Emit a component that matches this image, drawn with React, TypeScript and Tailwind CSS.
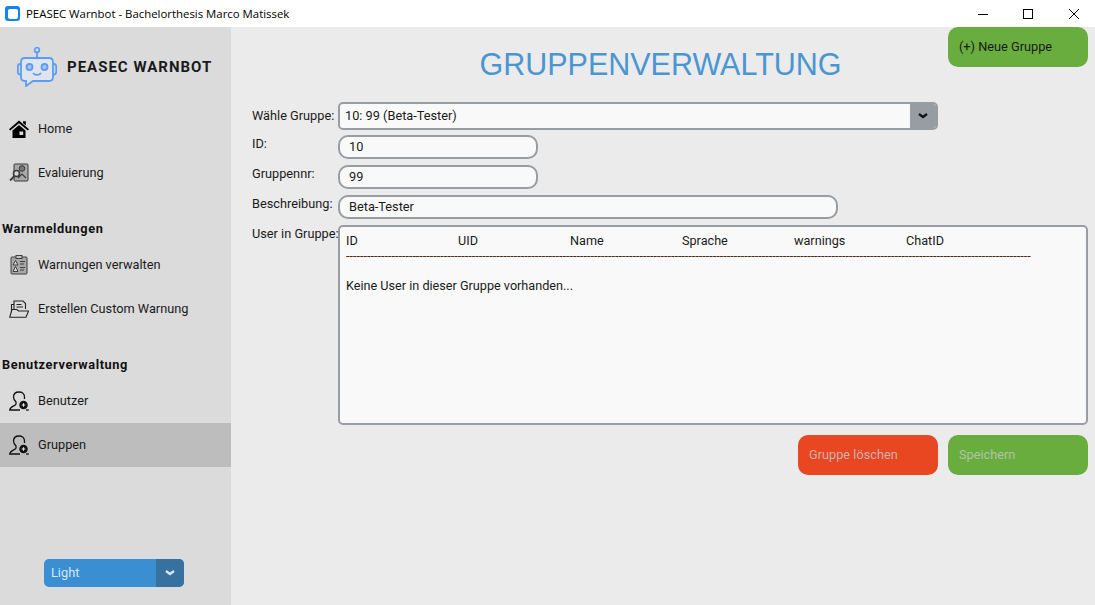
const HomeIcon = () => (
  <svg viewBox="0 0 20 18" className="h-[18px] w-5">
    <path d="M0 9.200 L10 0.500 L20 9.200 L18.800 10.600 L10 3.200 L1.200 10.600 Z M14 1.200 H16.800 V5.400 L14 3 Z" fill="#000" />
    <path fillRule="evenodd" d="M3.500 10.600 L10 5 L16.500 10.600 V18 H3.500 Z M10.500 11.500 V15 H14.200 V11.500 Z" fill="#000" />
  </svg>
);

const EvalIcon = () => (
  <svg viewBox="0 0 20 20" className="h-5 w-5" fill="none" stroke="#3a3a3a">
    <rect x="5" y="1" width="14" height="17" rx="1" fill="#a9a9a9" />
    <circle cx="13" cy="5.500" r="2.800" fill="#777" />
    <circle cx="7.500" cy="10.500" r="3" fill="#d8d8d8" strokeWidth="1.600" />
    <path d="M5.500 13 L1 17.500" strokeWidth="1.800" />
    <path d="M9 15 L13 11 L17 15" strokeWidth="1.200" />
  </svg>
);

const ManageIcon = () => (
  <svg viewBox="0 0 18 20" className="h-5 w-[18px]" fill="none" stroke="#3f3f3f">
    <rect x="1" y="2" width="16" height="17" rx="1" fill="#a8a8a8" />
    <rect x="6" y="0.500" width="6" height="3" fill="#c4c4c4" />
    <path d="M5.500 5.500 L8 10 H3 Z M5.500 11.500 L8 16.500 H3 Z" fill="#d8d8d8" />
    <path d="M10 6.500 H15 M10 9 H14 M10 12.500 H15 M10 15 H14" />
  </svg>
);

const FolderIcon = () => (
  <svg viewBox="0 0 20 18" className="h-[18px] w-5" fill="none" stroke="#222" strokeWidth="1.100">
    <path d="M5 9 V1 H14 L16.500 3.500 V9" />
    <path d="M7.500 4.500 H12.500 M7.500 7 H14" />
    <path d="M5 4.500 H2.500 V14" />
    <path d="M0.700 17.300 L3 9.500 H8 L9.500 11 H19.500 L17 17.300 Z" fill="#dbdbdb" />
  </svg>
);

const UserIcon = () => (
  <svg viewBox="0 0 20 20" className="h-5 w-5" fill="none" stroke="#111" strokeWidth="1.300">
    <path d="M15.500 8 V6 C15.500 2.500 13 1 10 1 C7 1 4.500 2.500 4.500 6 C4.500 8 5.500 9.500 7 11 V13 C7 15 1 15 0.800 19 H11" />
    <circle cx="14.500" cy="14" r="3.600" fill="#111" />
    <path d="M12.700 14 H16.300 M14.500 12.200 V15.800" stroke="#e8e8e8" strokeWidth="1.100" />
    <path d="M17 19 H19.800" />
  </svg>
);

const BotLogo = () => (
  <svg viewBox="0 0 40 40" className="h-10 w-10" fill="none" stroke="#5c9cf5" strokeWidth="1.800">
    <circle cx="20" cy="3" r="2.300" fill="#dbe6f5" />
    <path d="M20 5.500 V11" />
    <path d="M8 11 H32 C34.500 11 36 12.500 36 15 V30 C36 32.500 34.500 34 32 34 H16 L9 39 V34 H8 C5.500 34 4 32.500 4 30 V15 C4 12.500 5.500 11 8 11 Z" fill="#e0e5ed" />
    <path d="M4 17 H3 C1.500 17 0.800 18 0.800 19.500 V25 C0.800 26.500 1.500 27.500 3 27.500 H4 M36 17 H37 C38.500 17 39.200 18 39.200 19.500 V25 C39.200 26.500 38.500 27.500 37 27.500 H36" />
    <circle cx="12.500" cy="20" r="3" fill="#a9c6f0" />
    <circle cx="27.500" cy="20" r="3" fill="#a9c6f0" />
    <path d="M16 26 C18 28.500 22 28.500 24 26" />
  </svg>
);

// flat chevron of the combo boxes
const ComboArrow = ({ color }: { color: string }) => (
  <svg viewBox="0 0 10 6" className="h-[6px] w-[10px]" fill="none" stroke={color} strokeWidth="2.200">
    <path d="M1 1 L5 4 L9 1" />
  </svg>
);

const navTop = [
  { label: "Home", icon: <HomeIcon /> },
  { label: "Evaluierung", icon: <EvalIcon /> },
];
const navWarn = [
  { label: "Warnungen verwalten", icon: <ManageIcon /> },
  { label: "Erstellen Custom Warnung", icon: <FolderIcon /> },
];
const navUser = [
  { label: "Benutzer", icon: <UserIcon /> },
  { label: "Gruppen", icon: <UserIcon />, active: true },
];

const NavRow = ({ label, icon, active }: { label: string; icon: React.ReactNode; active?: boolean }) => (
  <div className={`flex h-11 items-center ${active ? "w-[231px] bg-[#bdbdbd]" : "w-[232px] bg-[#dbdbdb]"}`}>
    <span className="flex w-[38px] justify-center pl-[1px] pr-[2px]">{icon}</span>
    <span>{label}</span>
  </div>
);

const SectionTitle = ({ children }: { children: string }) => (
  <div className="flex h-12 items-end pb-[5px] pl-[2px] font-bold tracking-[0.6px] text-[#111]">{children}</div>
);

const FieldRow = ({ label, value, width }: { label: string; value: string; width: string }) => (
  <div className="flex h-[30px] items-start">
    <span className="w-[107px] pl-[21px] leading-[17px] whitespace-nowrap">{label}</span>
    <div className={`flex h-6 items-center rounded-[10px] border-2 border-[#979da2] bg-[#f9f9f9] pl-[9px] ${width}`}>
      {value}
    </div>
  </div>
);

const columns = ["ID", "UID", "Name", "Sprache", "warnings", "ChatID"];

export default function App() {
  return (
    <div className="flex h-[605px] w-[1095px] flex-col overflow-hidden bg-white font-['Roboto',sans-serif] text-[12.75px] text-[#1a1a1a]">
      {/* Titlebar */}
      <div className="flex h-[27px] shrink-0 items-center bg-white">
        <span className="ml-[5px] flex h-[15px] w-[15px] items-center justify-center rounded-[3px] bg-[#1384e8]">
          <span className="h-[10px] w-[10px] rounded-[2px] bg-white" />
        </span>
        <span className="ml-[6px] font-['Open_Sans',sans-serif] text-[11.4px] text-black">
          PEASEC Warnbot - Bachelorthesis Marco Matissek
        </span>
        <div className="ml-auto flex items-center text-black">
          <span className="flex w-[45px] justify-center">
            <svg viewBox="0 0 10 10" className="h-[10px] w-[10px]" stroke="currentColor" fill="none">
              <path d="M0 5.500 H10" />
            </svg>
          </span>
          <span className="flex w-[45px] justify-center">
            <svg viewBox="0 0 10 10" className="h-[10px] w-[10px]" stroke="currentColor" fill="none">
              <rect x="0.500" y="0.500" width="9" height="9" />
            </svg>
          </span>
          <span className="flex w-[45px] justify-center pl-[2px]">
            <svg viewBox="0 0 10 10" className="h-[10px] w-[10px]" stroke="currentColor" fill="none">
              <path d="M0 0 L10 10 M10 0 L0 10" />
            </svg>
          </span>
        </div>
      </div>

      <div className="flex min-h-0 flex-1">
        {/* Sidebar */}
        <aside className="flex w-[231px] shrink-0 flex-col bg-[#dbdbdb]">
          <div className="flex h-20 items-center gap-[10px] pl-[17px]">
            <BotLogo />
            <span className="text-[15px] font-bold tracking-[1px] whitespace-nowrap text-[#1a1a1a]">PEASEC WARNBOT</span>
          </div>
          {navTop.map((n) => (
            <NavRow key={n.label} {...n} />
          ))}
          <SectionTitle>Warnmeldungen</SectionTitle>
          {navWarn.map((n) => (
            <NavRow key={n.label} {...n} />
          ))}
          <SectionTitle>Benutzerverwaltung</SectionTitle>
          {navUser.map((n) => (
            <NavRow key={n.label} {...n} />
          ))}
          <div className="mt-auto mb-[18px] ml-[44px] flex h-7 w-[140px] overflow-hidden rounded-[5px] bg-[#3a8fd3] text-[#d6e8f8]">
            <span className="flex flex-1 items-center pl-[7px]">Light</span>
            <span className="flex w-7 items-center justify-center bg-[#36719f]">
              <ComboArrow color="#dce6ee" />
            </span>
          </div>
        </aside>

        {/* Main */}
        <main className="flex flex-1 flex-col bg-[#ebebeb] pr-[7px]">
          <div className="grid h-[75px] shrink-0 grid-cols-[140px_1fr_140px]">
            <div />
            <h1 className="pt-[17px] pl-[2px] text-center font-['Liberation_Sans',sans-serif] text-[30.5px] leading-10 text-[#4a96d2]">
              GRUPPENVERWALTUNG
            </h1>
            <div className="flex h-10 items-center rounded-[10px] bg-[#69ad3e] pl-[11px]">(+) Neue Gruppe</div>
          </div>

          <div className="flex h-[33px] items-start">
            <span className="flex h-[28px] w-[107px] items-center pl-[21px] whitespace-nowrap">Wähle Gruppe:</span>
            <div className="flex h-[28px] w-[600px] overflow-hidden rounded-[5px] border-2 border-[#979da2] bg-[#f9f9f9]">
              <span className="flex flex-1 items-center pl-[5px]">10: 99 (Beta-Tester)</span>
              <span className="flex w-[26px] items-center justify-center bg-[#979da2]">
                <ComboArrow color="#111" />
              </span>
            </div>
          </div>

          <FieldRow label="ID:" value="10" width="w-[200px]" />
          <FieldRow label="Gruppennr:" value="99" width="w-[200px]" />
          <FieldRow label="Beschreibung:" value="Beta-Tester" width="w-[500px]" />

          <div className="flex h-[200px] items-start">
            <span className="relative z-10 w-[107px] pl-[21px] leading-[17px] whitespace-nowrap">User in Gruppe:</span>
            <div className="flex h-[200px] flex-1 flex-col rounded-[5px] border-2 border-[#979da2] bg-[#f9f9f9] pt-[5px] pl-[6px] text-[12.65px]">
              <div className="grid w-[684px] grid-cols-[repeat(6,112px)]">
                {columns.map((c) => (
                  <span key={c}>{c}</span>
                ))}
              </div>
              <div className="h-[14px] leading-[10px] whitespace-nowrap text-[#4a2a10]">{"-".repeat(196)}</div>
              <div className="mt-[12px]">Keine User in dieser Gruppe vorhanden...</div>
            </div>
          </div>

          <div className="mt-[10px] flex justify-end gap-[10px]">
            <div className="flex h-10 w-[140px] items-center rounded-[10px] bg-[#e94622] pl-[11px] text-[#c9b3ad]">
              Gruppe löschen
            </div>
            <div className="flex h-10 w-[140px] items-center rounded-[10px] bg-[#69ad3e] pl-[11px] text-[#b3c3a9]">
              Speichern
            </div>
          </div>
        </main>
      </div>
    </div>
  );
}
